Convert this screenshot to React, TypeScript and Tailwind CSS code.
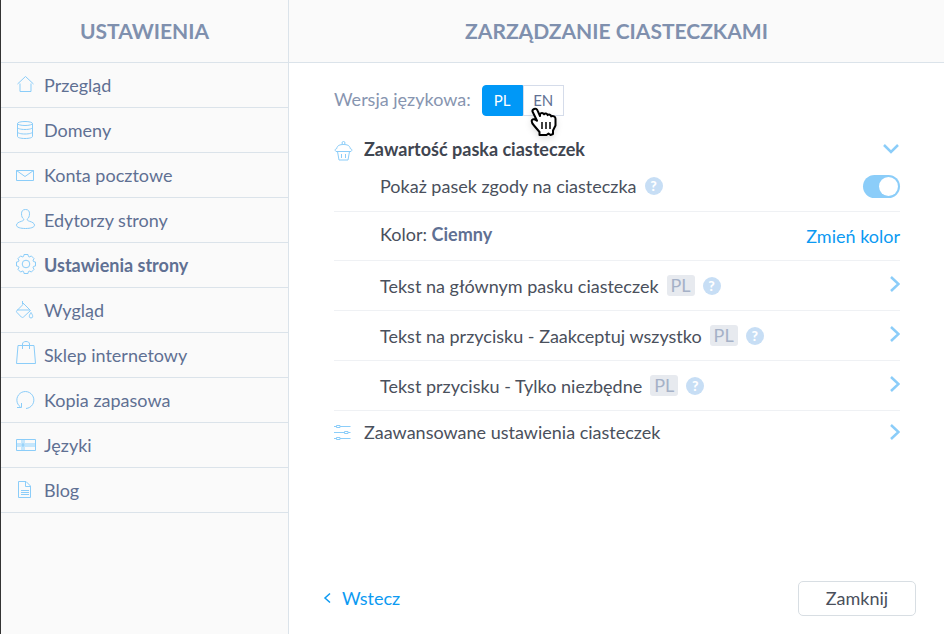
import { useState } from "react";
import type { ReactNode } from "react";

const menu: { label: string; icon: ReactNode }[] = [
  {
    label: "Przegląd",
    icon: <path d="M1.500 9 9.500 1.500l8 7.500M4 8.500v8h11v-8" />,
  },
  {
    label: "Domeny",
    icon: (
      <>
        <ellipse cx="9" cy="3.500" rx="7.500" ry="2" />
        <path d="M1.500 3.500v13c0 1 3 2 7.500 2s7.500-1 7.500-2v-13M1.500 7.500c0 1 3 2 7.500 2s7.500-1 7.500-2M1.500 12c0 1 3 2 7.500 2s7.500-1 7.500-2" />
      </>
    ),
  },
  {
    label: "Konta pocztowe",
    icon: <path d="M.5 5.500h17v10H.5zM.5 5.500 9 11.500l8.500-6" />,
  },
  {
    label: "Edytorzy strony",
    icon: (
      <path d="M9.500-.5c-3 0-4 1.800-4 4.300 0 2.400.8 4.400 2.200 5.200.4 1.200-.5 1.700-2 2.200-3 .9-5.200 2-5.200 4 0 2.200 4 3.300 9 3.300s9-1.100 9-3.300c0-2-2.200-3.100-5.200-4-1.500-.5-2.400-1-2-2.200 1.400-.8 2.200-2.800 2.200-5.200 0-2.500-1-4.300-4-4.300z" />
    ),
  },
  {
    label: "Ustawienia strony",
    icon: (
      <>
        <path
          d="M19.500 7v4Q15.400 11.200 18.100 14.300L15.300 17.100Q12.200 14.400 12 18.500H8Q7.800 14.400 4.700 17.100L1.900 14.300Q4.600 11.200.5 11V7Q4.600 6.800 1.900 3.700L4.700.9Q7.800 3.600 8-.5h4Q12.200 3.600 15.300.9L18.100 3.700Q15.400 6.800 19.500 7z"
          strokeLinejoin="round"
        />
        <circle cx="10" cy="9" r="3.800" />
      </>
    ),
  },
  {
    label: "Wygląd",
    icon: (
      <path d="M6.500 1v3.500M6.500 2.500l8 8-7 6.500c-.7.6-1.500.6-2.200 0L1 12.500c-.7-.7-.7-1.300 0-2l6-6M1 10h13M15 12.500c-1.200 2-1.700 2.800-1.700 3.800a1.700 1.700 0 0 0 3.400 0c0-1-.5-1.800-1.700-3.800z" />
    ),
  },
  {
    label: "Sklep internetowy",
    icon: (
      <path d="M2 .5h16l1.500 18H.5zM6.500 4V-1c0-1.600 1.500-2.500 3.500-2.500s3.500.9 3.500 2.500v5" />
    ),
  },
  {
    label: "Kopia zapasowa",
    icon: <path d="M4.500 17A8.500 8.500 0 1 1 10 18.500M5.500 13v4.500H1" />,
  },
  {
    label: "Języki",
    icon: (
      <>
        <path d="M5 4.500h4v11H5zM.5 8h19v4H.5z" fill="#c5e6fc" stroke="none" />
        <path d="M.5 4.500h19v11H.5zM7 8v4M5.500 10h3" />
      </>
    ),
  },
  {
    label: "Blog",
    icon: (
      <path d="M2.500 1.500h7.500l4.500 4.500v11.500h-12zM9.500 1.500v5h5M5 10.500h8M5 12.500h8M5 14.500h8" />
    ),
  },
];

const textRows = [
  "Tekst na głównym pasku ciasteczek",
  "Tekst na przycisku - Zaakceptuj wszystko",
  "Tekst przycisku - Tylko niezbędne",
];

function Chevron({ down = false }: { down?: boolean }) {
  return (
    <svg
      width={down ? 18 : 12}
      height={down ? 12 : 18}
      fill="none"
      stroke="#8bcdf9"
      strokeWidth="2.500"
      aria-hidden="true"
    >
      <path d={down ? "M2 2l7 7 7-7" : "M3 2l7.500 7L3 16"} />
    </svg>
  );
}

function Help() {
  return (
    <button
      type="button"
      aria-label="Pomoc"
      className="flex size-[18px] items-center justify-center rounded-full bg-[#c7def5] text-sm leading-none font-black text-white"
    >
      ?
    </button>
  );
}

function HandCursor() {
  return (
    <svg
      width="28"
      height="30"
      viewBox="0 0 28 30"
      className="pointer-events-none absolute top-[22px] left-12 drop-shadow-md"
      aria-hidden="true"
    >
      <path
        d="M4 2c1.500-.8 3 0 3.600 1.600L10 9V7c1-1.500 3-1.500 4 .3 1-1.300 3-1 3.700.8 1.200-1 3-.4 3.500 1.300 1.600-.9 4.300 0 4.300 2.400v6.700l-2.500 5v3.500l-2.500 1-2-1.500-2 1.500H9.500v-3L4 18.500c-1.800-2-3-3.500-2-5.500 1-1.300 3-1.200 5 .8L2.500 4.500C2.200 3.500 2.800 2.500 4 2z"
        fill="#fff"
        stroke="#000"
        strokeWidth="2"
        strokeLinejoin="round"
      />
      <path d="M12 15v7M16 15v7M20 15v7" stroke="#000" strokeWidth="1.500" />
    </svg>
  );
}

export default function App() {
  const [lang, setLang] = useState("PL");
  const [visible, setVisible] = useState(true);

  return (
    <div className="flex min-h-screen bg-white font-[Lato,sans-serif] text-lg leading-6 text-[#4a505c]">
      <aside className="w-[289px] shrink-0 border-r border-l border-r-[#dbe3ea] border-l-[#333] bg-[#fafafa]">
        <h2 className="flex h-[63px] items-center justify-center border-b border-[#dbe3ea] text-[21px] font-bold text-[#7f90ae]">
          USTAWIENIA
        </h2>
        <nav>
          {menu.map(({ label, icon }) => (
            <a
              key={label}
              href="#"
              className={`flex h-[45px] items-center gap-2 border-b border-[#dbe3ea] pl-[15px] text-[#5f7093] ${
                label === "Ustawienia strony" ? "font-bold" : ""
              }`}
            >
              <svg
                width="20"
                height="20"
                viewBox="0 0 20 20"
                fill="none"
                stroke="#8bcdf9"
                className="shrink-0 overflow-visible"
                aria-hidden="true"
              >
                {icon}
              </svg>
              {label}
            </a>
          ))}
        </nav>
      </aside>

      <main className="flex min-w-0 flex-1 flex-col">
        <h1 className="flex h-[63px] shrink-0 items-center justify-center border-b border-[#dbe3ea] bg-[#fafafa] text-[21px] font-bold text-[#7f90ae]">
          ZARZĄDZANIE CIASTECZKAMI
        </h1>

        <div className="pt-[22px] pr-11 pl-[45px]">
          <div className="flex h-[31px] gap-[11px] text-[#8795b0]">
            <span className="leading-7">Wersja językowa:</span>
            <div className="relative flex h-[31px] text-[15px]">
              {["PL", "EN"].map((code) => (
                <button
                  key={code}
                  type="button"
                  aria-pressed={lang === code}
                  onClick={() => setLang(code)}
                  className={`w-[41px] border pb-[2px] first:rounded-l last:rounded-r ${
                    lang === code
                      ? "border-[#0098f7] bg-[#0098f7] text-white"
                      : "border-[#d5dcea] text-[#5f7093]"
                  }`}
                >
                  {code}
                </button>
              ))}
              <HandCursor />
            </div>
          </div>

          <section>
            <button
              type="button"
              className="mt-[21px] flex w-full items-center text-left font-bold text-[#3f4550]"
            >
              <svg
                width="20"
                height="24"
                fill="none"
                stroke="#8bcdf9"
                className="mr-[10px] shrink-0"
                aria-hidden="true"
              >
                <circle cx="9.500" cy="6" r="1.500" />
                <path d="M2 14.500c-1.500-1-.8-2.800.8-3C3 8.500 6 7.500 9.500 7.500s6.500 1 6.700 4c1.600.2 2.300 2 .8 3zM3.500 14.500l1.500 8.500h9l1.500-8.500M7.500 17v4M11.500 17v4" />
              </svg>
              <span className="flex-1">Zawartość paska ciasteczek</span>
              <Chevron down />
            </button>

            <div className="flex h-[51px] items-center gap-2 border-b border-[#eff1f4] pl-[46px]">
              <label htmlFor="consent-bar">Pokaż pasek zgody na ciasteczka</label>
              <Help />
              <input
                id="consent-bar"
                type="checkbox"
                role="switch"
                checked={visible}
                onChange={(e) => setVisible(e.target.checked)}
                className="ml-auto flex h-[23px] w-[37px] appearance-none items-center rounded-full bg-[#d5dcea] px-[2px] before:size-[19px] before:rounded-full before:bg-white checked:justify-end checked:bg-[#8bcdf9]"
              />
            </div>
            <div className="flex h-[49px] items-center justify-between border-b border-[#eff1f4] pl-[46px]">
              <span className="pb-1">
                Kolor: <strong className="font-bold text-[#5f7093]">Ciemny</strong>
              </span>
              <button type="button" className="text-[#0c9af2]">
                Zmień kolor
              </button>
            </div>
            {textRows.map((text) => (
              <div
                key={text}
                className="flex h-[50px] items-center gap-2 border-b border-[#eff1f4] pl-[46px]"
              >
                <span>{text}</span>
                <span className="rounded-[3px] bg-[#e7eaef] px-1 leading-[21px] text-[#a5b1c7]">
                  PL
                </span>
                <Help />
                <button type="button" aria-label={text} className="ml-auto pb-1">
                  <Chevron />
                </button>
              </div>
            ))}
          </section>

          <button type="button" className="flex h-[42px] w-full items-center text-left">
            <svg
              width="18"
              height="18"
              fill="none"
              stroke="#8bcdf9"
              className="mr-3 shrink-0"
              aria-hidden="true"
            >
              <path d="M0 3.500h2.500M6 3.500h10.500M0 9.500h10.500M14 9.500h2.500M0 15.500h2.500M6 15.500h10.500M2.500 2.500H6v2H2.500zM10.500 8.500H14v2h-3.500zM2.500 14.500H6v2H2.500z" />
            </svg>
            <span className="flex-1">Zaawansowane ustawienia ciasteczek</span>
            <Chevron />
          </button>
        </div>

        <footer className="mt-auto flex items-center justify-between pr-7 pb-[18px] pl-[34px]">
          <a href="#" className="flex items-center gap-[11px] pb-[2px] text-[#0c9af2]">
            <svg
              width="8"
              height="12"
              fill="none"
              stroke="currentColor"
              strokeWidth="1.500"
              aria-hidden="true"
            >
              <path d="M7 1.500 2 6l5 4.500" />
            </svg>
            Wstecz
          </a>
          <button
            type="button"
            className="h-[35px] w-[118px] rounded-[5px] border border-[#d8dee3] pb-[2px]"
          >
            Zamknij
          </button>
        </footer>
      </main>
    </div>
  );
}
